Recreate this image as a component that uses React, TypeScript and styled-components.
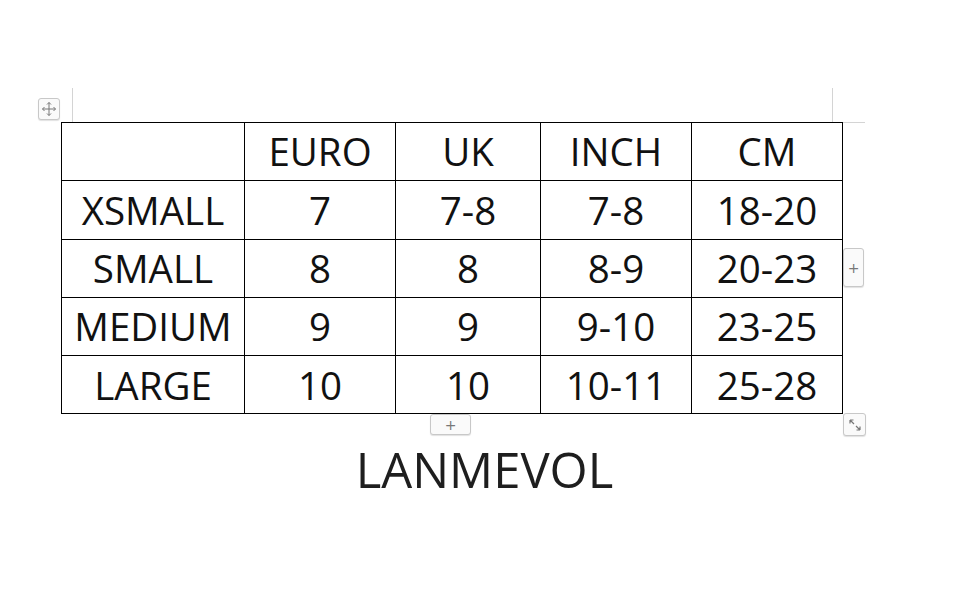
import styled, { createGlobalStyle } from "styled-components";

const GlobalStyle = createGlobalStyle`
  body {
    margin: 0;
    background: #ffffff;
    font-family: "Open Sans", "Noto Sans", sans-serif;
  }
`;

const Page = styled.div`
  width: 959px;
  height: 611px;
  display: flex;
  flex-direction: column;
`;

const TableArea = styled.div`
  position: relative;
  margin: 122px 0 0 61px;
  width: 782px;
`;

const SizeTable = styled.table`
  border-collapse: collapse;
  table-layout: fixed;
  width: 780px;
`;

const Cell = styled.td<{ $w?: number }>`
  width: ${(p) => (p.$w ? `${p.$w}px` : "auto")};
  height: 57.3px;
  padding: 0;
  border: 1px solid #000;
  text-align: center;
  vertical-align: middle;
  font-size: 38.5px;
  line-height: 1;
  color: #111;
  white-space: nowrap;
`;

const GuideV = styled.div<{ $left: number }>`
  position: absolute;
  top: -34px;
  left: ${(p) => p.$left}px;
  width: 1px;
  height: 34px;
  background: #d4d4d4;
`;

const GuideH = styled.div`
  position: absolute;
  top: 0;
  left: 782px;
  width: 22px;
  height: 1px;
  background: #d4d4d4;
`;

const Handle = styled.div<{ $top: number; $left: number; $w: number; $h: number }>`
  position: absolute;
  top: ${(p) => p.$top}px;
  left: ${(p) => p.$left}px;
  width: ${(p) => p.$w}px;
  height: ${(p) => p.$h}px;
  box-sizing: border-box;
  border: 1px solid #c8c8c8;
  border-radius: 3px;
  background: #fafafa;
  box-shadow: 0 1px 1px rgba(0, 0, 0, 0.12);
  display: flex;
  align-items: center;
  justify-content: center;
  color: #777;
  font-size: 14px;
  font-family: "DejaVu Sans", sans-serif;
`;

const Caption = styled.div`
  margin-top: 29px;
  padding-left: 10px;
  text-align: center;
  font-size: 49px;
  line-height: 1.1;
  color: #1e1e1e;
`;

const cols = [182, 150, 144, 150, 150];
const header = ["", "EURO", "UK", "INCH", "CM"];
const rows = [
  ["XSMALL", "7", "7-8", "7-8", "18-20"],
  ["SMALL", "8", "8", "8-9", "20-23"],
  ["MEDIUM", "9", "9", "9-10", "23-25"],
  ["LARGE", "10", "10", "10-11", "25-28"],
];

const MoveIcon = () => (
  <svg width="16" height="16" viewBox="0 0 16 16" fill="none" stroke="#777" strokeWidth="1">
    <path d="M8 1.5v13M1.5 8h13" />
    <path d="M6 3.5L8 1.5 10 3.5M6 12.5L8 14.5 10 12.5M3.5 6L1.5 8 3.5 10M12.5 6L14.5 8 12.5 10" />
  </svg>
);

const ResizeIcon = () => (
  <svg width="16" height="16" viewBox="0 0 16 16" fill="none" stroke="#777" strokeWidth="1.2">
    <path d="M3 3l4 4M3 3h3.5M3 3v3.5" />
    <path d="M13 13l-4-4M13 13h-3.5M13 13v-3.5" />
  </svg>
);

export default function App() {
  return (
    <Page>
      <GlobalStyle />
      <TableArea>
        <GuideV $left={11} />
        <GuideV $left={771} />
        <GuideH />
        <Handle $top={-24} $left={-23} $w={22} $h={22}>
          <MoveIcon />
        </Handle>
        <SizeTable>
          <tbody>
            <tr>
              {header.map((h, i) => (
                <Cell key={i} $w={cols[i]}>
                  {h}
                </Cell>
              ))}
            </tr>
            {rows.map((r) => (
              <tr key={r[0]}>
                {r.map((c, i) => (
                  <Cell key={i}>{c}</Cell>
                ))}
              </tr>
            ))}
          </tbody>
        </SizeTable>
        <Handle $top={126} $left={782} $w={21} $h={39}>
          +
        </Handle>
        <Handle $top={292} $left={369} $w={41} $h={21}>
          +
        </Handle>
        <Handle $top={291} $left={782} $w={23} $h={23}>
          <ResizeIcon />
        </Handle>
      </TableArea>
      <Caption>LANMEVOL</Caption>
    </Page>
  );
}
